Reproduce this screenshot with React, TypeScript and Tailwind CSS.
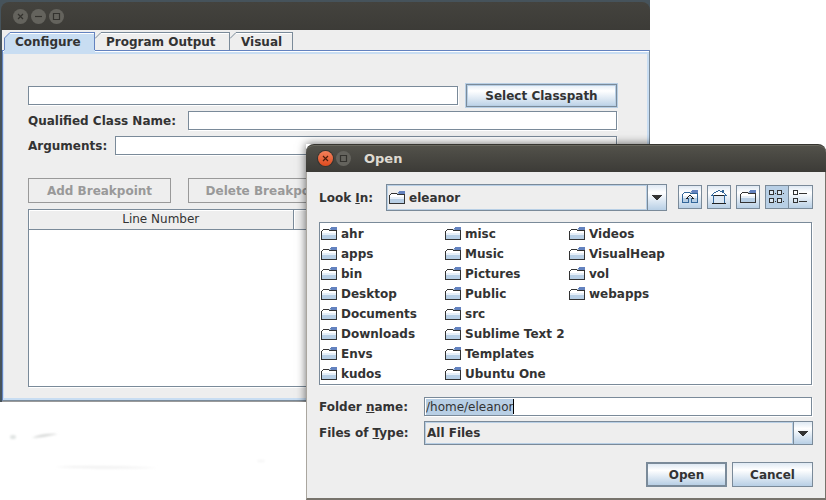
import React, { useEffect, useRef } from "react";

const FIELD =
  "h-[19px] min-w-0 flex-1 border border-[#7a8a99] bg-white px-1 text-xs outline-none shadow-[1px_1px_#fff]";
const METAL =
  "bg-linear-to-b from-[#dfe9f3] via-white via-30% to-[#b8cfe5]";
const TOOL = "flex h-6 w-6 items-center justify-center border border-[#7a8a99]";

const folders = [
  "ahr", "apps", "bin", "Desktop", "Documents", "Downloads", "Envs", "kudos",
  "misc", "Music", "Pictures", "Public", "src", "Sublime Text 2", "Templates", "Ubuntu One",
  "Videos", "VisualHeap", "vol", "webapps",
];

function FolderShape({ stroke = "#333333" }: { stroke?: string }) {
  return (
    <g shapeRendering="crispEdges">
      <rect x="1" y="4" width="14" height="3" fill="#fff" />
      <rect x="1" y="7" width="14" height="2" fill="#e6eff8" />
      <rect x="1" y="9" width="14" height="4" fill="#b8cfe5" />
      <path d="M2 3h6v1H2zM1 4h1v1H1zM8 4h7v1H8zM0 5h1v8H0zM15 3h1v10h-1zM0 13h16v1H0z" fill={stroke} />
      <path d="M10 1h6v3h-1v0H9V2h1z" fill="#6382bf" />
      <path d="M8 3h2v1H8z" fill="#a3b8cc" />
    </g>
  );
}

function FolderIcon({ stroke }: { stroke?: string }) {
  return (
    <svg className="h-4 w-4 shrink-0" viewBox="0 0 16 16" aria-hidden="true">
      <FolderShape stroke={stroke} />
    </svg>
  );
}

function UpFolderIcon() {
  return (
    <svg className="h-4 w-4" viewBox="0 0 16 16" aria-hidden="true">
      <FolderShape stroke="#336699" />
      <g shapeRendering="crispEdges">
        <path d="M7 8h2v6H7z" fill="#b8cfe5" />
        <path d="M6 9h1v5H6zM9 9h1v5H9zM5 13h1v1H5zM10 13h1v1h-1z" fill="#336699" />
        <path d="M7 6h2v1H7zM6 7h1v1H6zM9 7h1v1H9zM5 8h1v1H5zM10 8h1v1h-1zM4 9h2v1H4zM10 9h2v1h-2z" fill="#222" />
      </g>
    </svg>
  );
}

function HomeIcon() {
  return (
    <svg className="h-4 w-4" viewBox="0 0 16 16" aria-hidden="true" shapeRendering="crispEdges">
      <path d="M7 2h2v1h2v1h2v1h2v2H1V5h2V4h2V3h2z" fill="#fff" />
      <path d="M3 7h10v8H3z" fill="#dce8f4" />
      <path
        d="M7 1h2v1H7zM5 2h2v1H5zM9 2h2v1H9zM11 1h2v3h-2zM3 3h2v1H3zM2 4h1v1H2zM13 4h1v1h-1zM1 5h1v1H1zM14 5h1v1h-1zM0 6h3v1H0zM13 6h3v1h-3zM2 7h1v8H2zM13 7h1v8h-1z"
        fill="#336699"
      />
      <path d="M3 6h10v1H3zM1 14h14v1H1z" fill="#222" />
    </svg>
  );
}

function ListIcon() {
  return (
    <svg className="h-4 w-4" viewBox="0 0 16 16" aria-hidden="true" shapeRendering="crispEdges">
      <g fill="none" stroke="#333">
        <path d="M.5 1.500h4v4h-4zM8.500 1.500h4v4h-4zM.5 9.500h4v4h-4zM8.500 9.500h4v4h-4z" fill="#dce8f4" />
        <path d="M6 4.500h1M14 4.500h1M6 12.500h1M14 12.500h1" />
      </g>
    </svg>
  );
}

function DetailsIcon() {
  return (
    <svg className="h-4 w-4" viewBox="0 0 16 16" aria-hidden="true" shapeRendering="crispEdges">
      <g fill="none" stroke="#333">
        <path d="M.5 1.500h4v4h-4zM.5 9.500h4v4h-4z" />
        <path d="M6 4.500h8M6 12.500h8" />
      </g>
    </svg>
  );
}

type Glyph = "close" | "min" | "max";

function WindowButton({ glyph, label, active }: { glyph: Glyph; label: string; active?: boolean }) {
  return (
    <button
      aria-label={label}
      className={
        "flex h-[15px] w-[15px] items-center justify-center rounded-full " +
        (active
          ? "bg-linear-to-b from-[#f4805a] to-[#dd4a1c] shadow-[0_0_0_1px_#35332f]"
          : "bg-[#64635d]")
      }
    >
      <svg className="h-[15px] w-[15px]" viewBox="0 0 15 15" fill="none" stroke={active ? "#4a1d0c" : "#33322e"} strokeWidth="1.2">
        {glyph === "close" && <path d="M5 5l5 5M10 5l-5 5" />}
        {glyph === "min" && <path d="M4 7.500h7" />}
        {glyph === "max" && <path d="M4.500 4.500h6v6h-6z" />}
      </svg>
    </button>
  );
}

function Tab({ label, width, selected }: { label: string; width: string; selected?: boolean }) {
  const line = selected ? "#6382bf" : "#7a8a99";
  return (
    <button
      role="tab"
      aria-selected={!!selected}
      className={"relative flex text-xs font-bold " + width + (selected ? " z-10 h-[22px]" : " h-[18px]")}
    >
      <svg className="h-full w-1.5 shrink-0" aria-hidden="true">
        <path d={selected ? "M6 0L0 6V22H6Z" : "M6 0L0 6V18H6Z"} fill={selected ? "#c8ddf2" : "#eeeeee"} />
        <path d="M0 6.500L6 .5" stroke={line} fill="none" />
        {selected && <path d="M.5 6v12" stroke={line} />}
      </svg>
      <span
        className={
          "flex h-[18px] flex-1 border-t border-r pl-[5px] leading-[18px] whitespace-nowrap " +
          (selected
            ? "border-[#6382bf] bg-[#c8ddf2] shadow-[0_4px_#c8ddf2,inset_0_1px_#fff]"
            : "border-[#7a8a99] bg-[#eeeeee] shadow-[inset_0_1px_#fff]")
        }
      >
        {label}
      </span>
    </button>
  );
}

function Combo({
  id, value, icon, height,
}: { id: string; value: string; icon?: boolean; height: string }) {
  return (
    <div className={"relative flex min-w-0 flex-1 border border-[#7a8a99] " + height}>
      <select
        id={id}
        className={
          "min-w-0 flex-1 appearance-none border border-[#b8cfe5] bg-[#eeeeee] text-xs font-bold outline-none " +
          (icon ? "pl-[21px]" : "pl-px")
        }
      >
        <option>{value}</option>
      </select>
      <span className={"pointer-events-none flex w-[19px] items-center justify-center border-l border-[#7a8a99] " + METAL}>
        <svg className="h-[5px] w-2.5" viewBox="0 0 10 5" shapeRendering="crispEdges" aria-hidden="true">
          <path d="M0 0h10v1H9v1H8v1H7v1H6v1H4V4H3V3H2V2H1V1H0z" fill="#333" />
        </svg>
      </span>
      {icon && (
        <span className="pointer-events-none absolute inset-y-0 left-0.5 flex items-center">
          <FolderIcon />
        </span>
      )}
    </div>
  );
}

function MainWindow() {
  return (
    <section className="relative w-[650px] overflow-hidden bg-[#46535b] pt-0.5 pl-0.5">
      <header className="-ml-px flex h-7 items-center gap-[3px] rounded-t-lg bg-linear-to-b from-[#44433e] to-[#3c3b37] pl-3">
        <WindowButton glyph="close" label="Close" />
        <WindowButton glyph="min" label="Minimize" />
        <WindowButton glyph="max" label="Maximize" />
      </header>
      <div className="border-b border-[#9a9a9a] bg-[#eeeeee]">
        <div role="tablist" className="flex h-5 items-start pt-0.5 pl-0.5">
          <Tab label="Configure" width="w-[91px]" selected />
          <Tab label="Program Output" width="w-[135px]" />
          <Tab label="Visual" width="w-[63px]" />
        </div>
        <div className="border border-t-[#6382bf] border-r-[#7a8a99] border-b-[#7a8a99] border-l-[#6382bf] pt-8 pr-[31px] pb-[13px] pl-[25px] shadow-[inset_0_1px_#fff,inset_1px_0_#c8ddf2,inset_0_3px_#c8ddf2,inset_-2px_-2px_#c8ddf2]">
          <div className="flex h-[25px] items-center gap-[7px]">
            <input aria-label="Classpath" className={FIELD} />
            <button
              className={
                "h-[25px] w-[153px] border border-[#b8cfe5] text-xs font-bold shadow-[inset_0_0_0_1px_#7a8a99,inset_0_0_0_2px_#b8cfe5] " +
                METAL
              }
            >
              Select Classpath
            </button>
          </div>
          <div className="flex h-[25px] items-center pr-px">
            <label htmlFor="cls" className="w-[160px] text-xs font-bold">Qualified Class Name:</label>
            <input id="cls" className={FIELD} />
          </div>
          <div className="flex h-[25px] items-center pr-px">
            <label htmlFor="args" className="w-[87px] text-xs font-bold">Arguments:</label>
            <input id="args" className={FIELD} />
          </div>
          <div className="mt-5 flex w-[278px] gap-[17px] overflow-hidden">
            <button disabled className="h-[25px] w-[143px] shrink-0 border border-[#999] text-xs font-bold text-[#999]">Add Breakpoint</button>
            <button disabled className="h-[25px] w-[158px] shrink-0 border border-[#999] text-xs font-bold text-[#999]">Delete Breakpoint</button>
          </div>
          <div className="mt-1.5 mr-px border border-[#7a8a99] bg-white shadow-[1px_1px_#fff]">
            <table className="w-full table-fixed border-collapse text-xs">
              <thead>
                <tr className="h-[19px] bg-[#eeeeee]">
                  <th className="w-[264px] border-r border-b border-[#7a8a99] p-0 font-normal shadow-[inset_1px_1px_#fff]">Line Number</th>
                  <th className="border-b border-[#7a8a99] p-0 font-normal shadow-[inset_1px_1px_#fff]" />
                </tr>
              </thead>
              <tbody>
                <tr className="h-[157px]">
                  <td colSpan={2} />
                </tr>
              </tbody>
            </table>
          </div>
        </div>
      </div>
      {/* shade cast by the dialog on the window behind it */}
      <div className="pointer-events-none absolute top-36 right-[-100px] bottom-[-100px] left-[306px] shadow-[0_0_9px_rgba(0,0,0,0.6)]" />
    </section>
  );
}

function OpenDialog() {
  const nameRef = useRef<HTMLInputElement>(null);
  useEffect(() => {
    nameRef.current?.focus();
    nameRef.current?.select();
  }, []);

  return (
    <section role="dialog" aria-label="Open" className="absolute top-36 right-0 bottom-0 left-[306px] flex flex-col">
      <header className="flex h-7 shrink-0 items-center gap-[3px] rounded-t-lg border-t border-[#35342f] bg-linear-to-b from-[#53524b] to-[#3c3b37] pl-3 shadow-[inset_0_1px_#69685f]">
        <WindowButton glyph="close" label="Close" active />
        <WindowButton glyph="max" label="Maximize" />
        <h1 className="pl-2.5 text-[13px] font-bold text-[#dfdbd2]">Open</h1>
      </header>
      <div className="flex flex-1 flex-col border-r border-b-2 border-l border-r-[#77736c] border-b-[#77736c] border-l-[#aaa69f] bg-[#eeeeee] px-3 pt-3">
        <div className="flex items-center">
          <label htmlFor="look" className="w-[67px] text-xs font-bold">Look <u>I</u>n:</label>
          <Combo id="look" value="eleanor" icon height="h-[27px]" />
          <div className="-mt-px ml-[11px] flex gap-[5px]">
            <button aria-label="Up one level" className={TOOL + " " + METAL}><UpFolderIcon /></button>
            <button aria-label="Home" className={TOOL + " " + METAL}><HomeIcon /></button>
            <button aria-label="New folder" className={TOOL + " " + METAL}><FolderIcon /></button>
            <div className="flex">
              <button aria-label="List" aria-pressed="true" className={TOOL + " bg-[#b8cfe5]"}><ListIcon /></button>
              <button aria-label="Details" className={TOOL + " border-l-0 " + METAL}><DetailsIcon /></button>
            </div>
          </div>
        </div>
        <ul className="mt-[11px] mr-px grid h-[163px] auto-cols-[124px] grid-flow-col grid-rows-[repeat(8,20px)] border border-[#7a8a99] bg-white pt-px pl-px text-xs font-bold shadow-[1px_1px_#fff]">
          {folders.map((name) => (
            <li key={name} className="flex items-center gap-1 whitespace-nowrap">
              <FolderIcon />
              {name}
            </li>
          ))}
        </ul>
        <div className="mt-3 mr-px flex items-center">
          <label htmlFor="fname" className="w-[105px] text-xs font-bold">Folder <u>n</u>ame:</label>
          <div className="flex h-[19px] flex-1 items-center border border-[#7a8a99] bg-white pl-px shadow-[1px_1px_#fff]">
            <input
              id="fname"
              ref={nameRef}
              defaultValue="/home/eleanor"
              className="field-sizing-content h-4 text-xs outline-none selection:bg-[#b8cfe5] selection:text-[#333]"
            />
            <span className="h-[15px] w-px bg-black" />
          </div>
        </div>
        <div className="mt-[5px] flex items-center">
          <label htmlFor="ftype" className="w-[105px] text-xs font-bold">Files of <u>T</u>ype:</label>
          <Combo id="ftype" value="All Files" height="h-6" />
        </div>
        <div className="mt-[17px] flex justify-end gap-[5px]">
          <button className={"h-[25px] w-[81px] border-2 border-[#7a8a99] text-xs font-bold " + METAL}>Open</button>
          <button className={"h-[25px] w-[81px] border border-[#7a8a99] text-xs font-bold " + METAL}>Cancel</button>
        </div>
      </div>
    </section>
  );
}

export default function App() {
  return (
    <main className="relative h-screen min-h-[500px] overflow-hidden bg-white font-['DejaVu_Sans',sans-serif] text-[#333]">
      <MainWindow />
      <svg className="absolute top-[402px] left-0 h-[98px] w-[306px]" viewBox="0 0 306 98" aria-hidden="true">
        <defs>
          <filter id="soft"><feGaussianBlur stdDeviation="1" /></filter>
        </defs>
        <g filter="url(#soft)">
          <ellipse cx="13" cy="35" rx="3" ry="2" fill="#dfe3e2" />
          <path d="M32 36q10-5 26-4q-12 3-26 4z" fill="#d5d7d6" />
          <path d="M54 65q40-3 105 1q-60 2-105-1z" fill="#f2f2f2" />
          <ellipse cx="261" cy="59" rx="4" ry="1" fill="#f4f4f4" />
        </g>
      </svg>
      <OpenDialog />
    </main>
  );
}
